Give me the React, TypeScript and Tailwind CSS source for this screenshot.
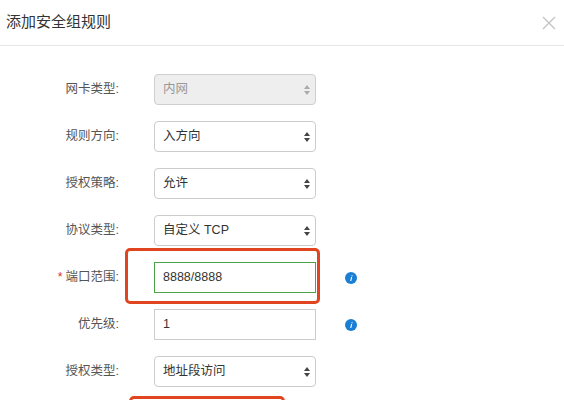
import React from 'react';

const Arrows = ({ light }: { light?: boolean }) => (
  <svg width="6" height="10" viewBox="0 0 6 10" className="absolute right-[5px] top-1/2 -translate-y-1/2">
    <path d="M3 0L6 4H0z" fill={light ? '#aaa' : '#444'} />
    <path d="M3 10L6 6H0z" fill={light ? '#aaa' : '#444'} />
  </svg>
);

const Info = () => (
  <svg width="12" height="12" viewBox="0 0 12 12">
    <circle cx="6" cy="6" r="6" fill="#1a7fd4" />
    <path d="M6.6 3.2h1.1L7.5 4.2H6.4zM6.1 5h1.1l-0.9 4H5.2z" fill="#fff" />
  </svg>
);

type Row = { label: string; value: string; kind: 'select' | 'disabled' | 'input' | 'active'; req?: boolean; info?: boolean };

const rows: Row[] = [
  { label: '网卡类型:', value: '内网', kind: 'disabled' },
  { label: '规则方向:', value: '入方向', kind: 'select' },
  { label: '授权策略:', value: '允许', kind: 'select' },
  { label: '协议类型:', value: '自定义 TCP', kind: 'select' },
  { label: '端口范围:', value: '8888/8888', kind: 'active', req: true, info: true },
  { label: '优先级:', value: '1', kind: 'input', info: true },
  { label: '授权类型:', value: '地址段访问', kind: 'select' },
];

export default function App() {
  return (
    <div className="relative w-[564px] h-[400px] overflow-hidden bg-white text-[#333]" style={{ fontFamily: '"Helvetica Neue", "Liberation Sans", "Noto Sans CJK SC", sans-serif' }}>
      <div className="h-[46px] flex items-center justify-between pl-[6px] pr-[8px] border-b border-[#e5e5e5]">
        <span className="text-[15px] text-[#333]">添加安全组规则</span>
        <svg width="14" height="14" viewBox="0 0 14 14"><path d="M1 1L13 13M13 1L1 13" stroke="#c4c4c4" strokeWidth="1.4" /></svg>
      </div>
      <div className="pt-[28px] flex flex-col gap-[16px]">
        {rows.map((r) => (
          <div key={r.label} className="flex items-center h-[31px]">
            <div className="w-[119px] text-right text-[12.5px] text-[#555]">
              {r.req && <span className="text-[#d9342b] mr-[3px]">*</span>}
              {r.label}
            </div>
            <div
              className={
                'relative ml-[35px] w-[162px] h-[31px] flex items-center pl-[8px] text-[12.5px] border ' +
                (r.kind === 'disabled'
                  ? 'bg-[#eeeeee] border-[#cfcfcf] rounded-[4px] text-[#999]'
                  : r.kind === 'select'
                  ? 'bg-white border-[#cccccc] rounded-[4px] text-[#333]'
                  : r.kind === 'active'
                  ? 'bg-white border-[#4aa345] text-[#333]'
                  : 'bg-white border-[#cccccc] text-[#333]')
              }
            >
              {r.value}
              {(r.kind === 'select' || r.kind === 'disabled') && <Arrows light={r.kind === 'disabled'} />}
            </div>
            {r.info && (
              <div className="ml-[29px] flex items-center"><Info /></div>
            )}
          </div>
        ))}
      </div>
      <div className="absolute left-[125px] top-[248px] w-[195px] h-[56px] border-[3px] border-[#e0451f] rounded-[5px]" />
      <div className="absolute left-[129px] top-[396px] w-[156px] h-[20px] border-[3px] border-[#e0451f] rounded-[5px]" />
    </div>
  );
}
